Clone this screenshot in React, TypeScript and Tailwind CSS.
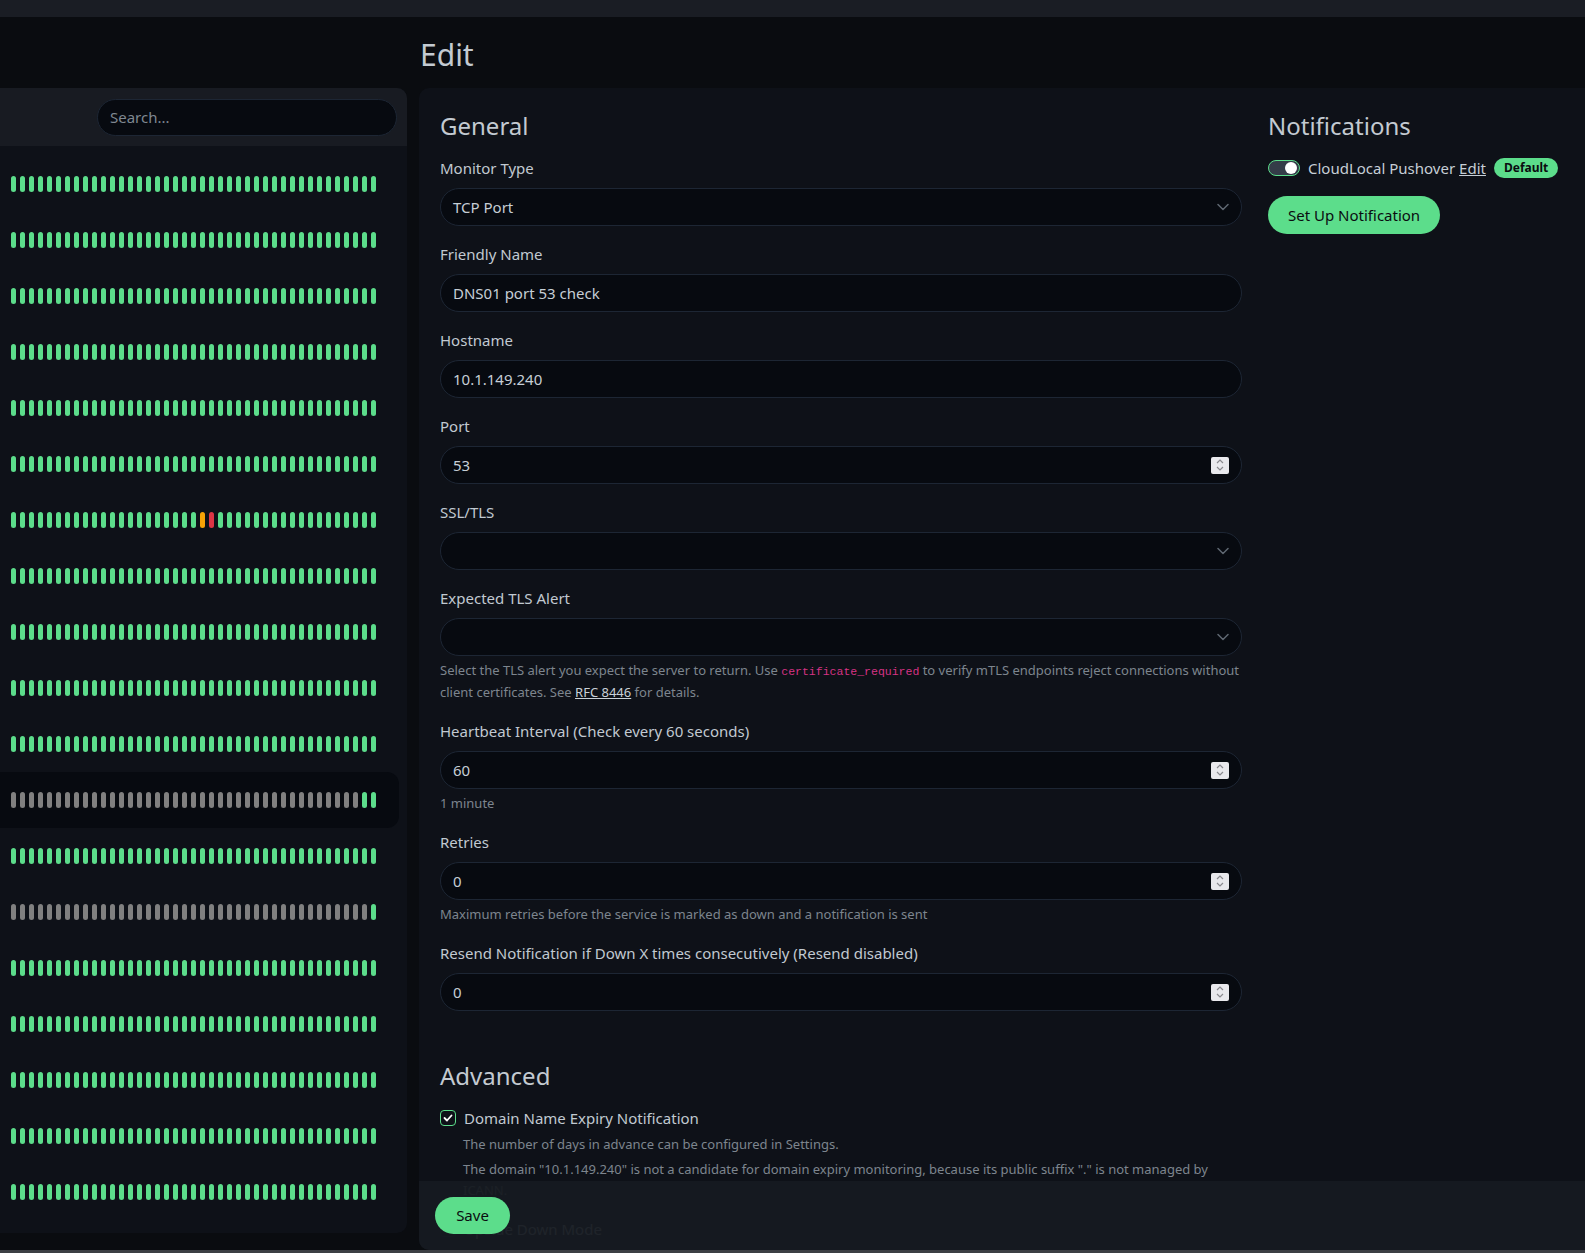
import React from 'react';

type Beat = 'up' | 'down' | 'pending' | 'empty';

const beatColor: Record<Beat, string> = {
  up: 'bg-[#5cdd8b]',
  down: 'bg-[#dc3545]',
  pending: 'bg-[#f8a306]',
  empty: 'bg-[#808080]',
};

// 19 monitors, 41 beats each
const rows: Beat[][] = Array.from({ length: 19 }, (_, i) => {
  const beats: Beat[] = Array(41).fill('up');
  if (i === 6) {
    beats[21] = 'pending';
    beats[22] = 'down';
  }
  if (i === 11) for (let j = 0; j < 39; j++) beats[j] = 'empty';
  if (i === 13) for (let j = 0; j < 40; j++) beats[j] = 'empty';
  return beats;
});

function Chevron() {
  return (
    <svg width="12" height="8" viewBox="0 0 12 8" fill="none">
      <path d="M1 1.5l5 5 5-5" stroke="#5f6771" strokeWidth="1.5" strokeLinecap="round" strokeLinejoin="round" />
    </svg>
  );
}

function Spinner() {
  return (
    <div className="flex h-[17px] w-[18px] flex-col items-center justify-center gap-[2px] rounded-[2px] bg-[#e9e9ed]">
      <svg width="8" height="5" viewBox="0 0 8 5" fill="none">
        <path d="M1 4l3-3 3 3" stroke="#8a8a8f" strokeWidth="1.2" />
      </svg>
      <svg width="8" height="5" viewBox="0 0 8 5" fill="none">
        <path d="M1 1l3 3 3-3" stroke="#8a8a8f" strokeWidth="1.2" />
      </svg>
    </div>
  );
}

function Input({ value, kind = 'text' }: { value?: string; kind?: 'text' | 'select' | 'number' }) {
  return (
    <div className="flex h-[38px] items-center justify-between rounded-full border border-[#1d2634] bg-[#070a10] pl-3 pr-3 text-[15px] text-[#c6ced6]">
      <span>{value}</span>
      {kind === 'select' && <Chevron />}
      {kind === 'number' && <Spinner />}
    </div>
  );
}

function Field({ label, children, help }: { label: string; children: React.ReactNode; help?: React.ReactNode }) {
  return (
    <div className="mb-4">
      <div className="mb-2 text-[15px] leading-6 text-[#c1c9d1]">{label}</div>
      {children}
      {help && <div className="mt-1 text-[13px] leading-[21px] text-[#7d858e]">{help}</div>}
    </div>
  );
}

function Checkbox() {
  return (
    <div className="flex h-[16px] w-[16px] items-center justify-center rounded-[4px] border border-[#5cdd8b] bg-[#0e1118]">
      <svg width="10" height="8" viewBox="0 0 10 8" fill="none">
        <path d="M1.5 4l2.5 2.5 4.5-5" stroke="#ffffff" strokeWidth="1.8" strokeLinecap="round" strokeLinejoin="round" />
      </svg>
    </div>
  );
}

export default function App() {
  return (
    <div className="flex h-[1253px] w-full flex-col overflow-hidden bg-[#0a0c10] font-['Noto_Sans',sans-serif]">
      <div className="h-[17px] shrink-0 bg-[#1a1d24]" />

      <div className="flex h-[1233px] shrink-0">
        {/* Sidebar */}
        <div className="mt-[71px] flex h-[1145px] w-[407px] shrink-0 flex-col overflow-hidden rounded-r-[10px] bg-[#0e1118]">
          <div className="flex h-[58px] shrink-0 items-center justify-end bg-[#181b22] pr-[10px]">
            <div className="flex h-[37px] w-[300px] items-center rounded-full border border-[#1d2634] bg-[#070a10] pl-3 text-[15px] text-[#7f8790]">
              Search...
            </div>
          </div>
          <div className="pt-[10px]">
            {rows.map((beats, i) => (
              <div
                key={i}
                className={`mr-[8px] flex h-[56px] items-center gap-[4px] rounded-r-[12px] pl-[11px] ${i === 11 ? 'bg-[#070a10]' : ''}`}
              >
                {beats.map((b, j) => (
                  <div key={j} className={`h-[16px] w-[5px] rounded-full ${beatColor[b]}`} />
                ))}
              </div>
            ))}
          </div>
        </div>

        {/* Main */}
        <div className="ml-[12px] flex min-w-0 flex-1 flex-col">
          <div className="flex h-[71px] shrink-0 items-end pb-[14px] pl-[1px]">
            <h1 className="text-[30px] leading-[38px] text-[#c3cad1]">Edit</h1>
          </div>

          <div className="relative h-[1162px] overflow-hidden rounded-l-[10px] bg-[#0e1118] pl-[21px] pt-[22px]">
            <div className="grid grid-cols-[802px_1fr] gap-x-[26px]">
              <div className="flex flex-col">
                <h2 className="mb-[14px] text-[24px] leading-[32px] text-[#c3cad1]">General</h2>
                <Field label="Monitor Type">
                  <Input value="TCP Port" kind="select" />
                </Field>
                <Field label="Friendly Name">
                  <Input value="DNS01 port 53 check" />
                </Field>
                <Field label="Hostname">
                  <Input value="10.1.149.240" />
                </Field>
                <Field label="Port">
                  <Input value="53" kind="number" />
                </Field>
                <Field label="SSL/TLS">
                  <Input kind="select" />
                </Field>
                <Field
                  label="Expected TLS Alert"
                  help={
                    <>
                      Select the TLS alert you expect the server to return. Use{' '}
                      <code className="font-['Liberation_Mono',monospace] text-[11.5px] text-[#d63384]">certificate_required</code> to
                      verify mTLS endpoints reject connections without client certificates. See{' '}
                      <span className="text-[#c9d0d7] underline">RFC 8446</span> for details.
                    </>
                  }
                >
                  <Input kind="select" />
                </Field>
                <Field label="Heartbeat Interval (Check every 60 seconds)" help="1 minute">
                  <Input value="60" kind="number" />
                </Field>
                <Field label="Retries" help="Maximum retries before the service is marked as down and a notification is sent">
                  <Input value="0" kind="number" />
                </Field>
                <Field label="Resend Notification if Down X times consecutively (Resend disabled)">
                  <Input value="0" kind="number" />
                </Field>

                <h2 className="mb-[14px] mt-[33px] text-[24px] leading-[32px] text-[#c3cad1]">Advanced</h2>
                <div className="mb-4">
                  <div className="flex h-6 items-center gap-[8px] text-[15px] text-[#c1c9d1]">
                    <Checkbox />
                    <span>Domain Name Expiry Notification</span>
                  </div>
                  <div className="pl-[23px]">
                    <div className="mt-1 text-[13px] leading-[21px] text-[#7d858e]">
                      The number of days in advance can be configured in Settings.
                    </div>
                    <div className="mt-1 text-[13px] leading-[21px] text-[#7d858e]">
                      The domain "10.1.149.240" is not a candidate for domain expiry monitoring, because its public suffix "." is not
                      managed by ICANN.
                    </div>
                  </div>
                </div>
                <div className="flex h-6 items-center gap-[8px] text-[15px] text-[#c1c9d1]">
                  <div className="h-[16px] w-[16px] rounded-[4px] border border-[#1d2634] bg-[#070a10]" />
                  <span>Upside Down Mode</span>
                </div>
              </div>

              <div>
                <h2 className="mb-[14px] text-[24px] leading-[32px] text-[#c3cad1]">Notifications</h2>
                <div className="flex h-6 items-center text-[15px] text-[#c6ced6]">
                  <div className="mr-[8px] flex h-[16px] w-[32px] items-center justify-end rounded-full border border-[#5cdd8b] bg-[#343c48] pr-[2px]">
                    <div className="h-[12px] w-[12px] rounded-full bg-white" />
                  </div>
                  <span>CloudLocal Pushover</span>
                  <span className="ml-[4px] underline">Edit</span>
                  <span className="ml-[8px] flex h-[20px] items-center rounded-full bg-[#5cdd8b] px-[10px] text-[12px] font-bold text-[#0a0c10]">
                    Default
                  </span>
                </div>
                <button className="mt-[16px] h-[38px] rounded-full bg-[#5cdd8b] px-[20px] text-[15px] text-[#0a0c10]">
                  Set Up Notification
                </button>
              </div>
            </div>

            {/* sticky save bar over the form */}
            <div className="absolute bottom-0 left-0 right-0 h-[69px] bg-[#161a21]/95 pl-[16px] pt-[16px]">
              <button className="h-[37px] w-[75px] rounded-full bg-[#5cdd8b] text-[15px] text-[#0a0c10]">Save</button>
            </div>
          </div>
        </div>
      </div>

      <div className="h-[3px] shrink-0 bg-[#3c3f44]" />
    </div>
  );
}
